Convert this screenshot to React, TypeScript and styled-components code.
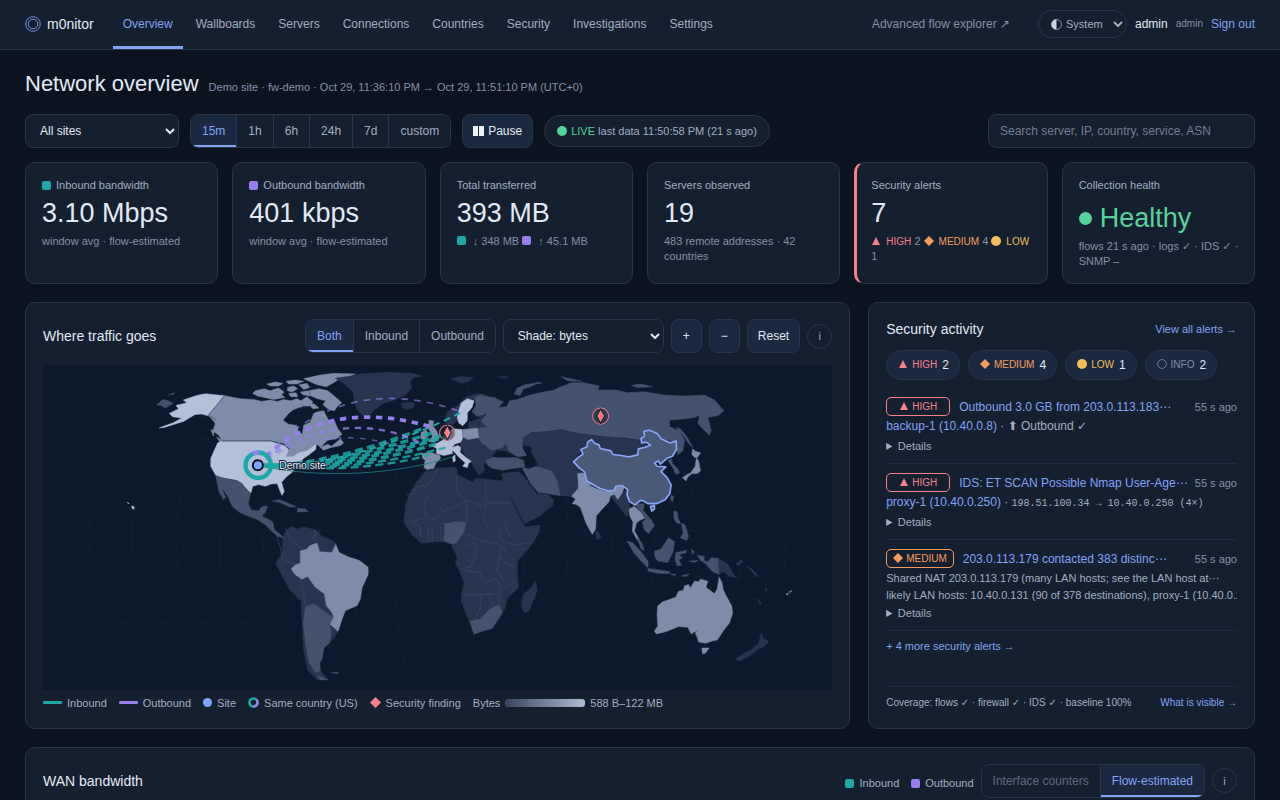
import React from 'react';
import styled, { createGlobalStyle, css } from 'styled-components';

const c = {
  bg: '#0b1320',
  panel: '#141f30',
  raised: '#1a2840',
  line: '#28354a',
  soft: '#202c40',
  text: '#e2e9f5',
  mid: '#a3afc1',
  dim: '#8591a5',
  faint: '#5f6b7e',
  accent: '#82a4f4',
  inb: '#1ba8a6',
  outb: '#9580ee',
  high: '#f9808a',
  medium: '#f79d5c',
  low: '#f3bd5c',
  ok: '#56d39a',
};

const Global = createGlobalStyle`
  * { box-sizing: border-box; }
  html { color-scheme: dark; }
  body {
    margin: 0;
    background: ${c.bg};
    color: ${c.text};
    font: 12px/16px "Liberation Sans", Arial, "DejaVu Sans", sans-serif;
  }
  button, input, select { font: inherit; color: inherit; }
  a { color: ${c.accent}; text-decoration: none; }
  h1, h2, p { margin: 0; font-weight: 400; }
`;

const Shell = styled.div`
  display: flex;
  flex-direction: column;
  height: 100vh;
`;

const TopBar = styled.header`
  display: flex;
  align-items: stretch;
  flex: none;
  height: 50px;
  padding: 0 25px;
  background: ${c.panel};
  border-bottom: 1px solid ${c.line};
`;

const Brand = styled.a`
  display: flex;
  align-items: center;
  gap: 6px;
  margin-right: 19px;
  padding-bottom: 2px;
  font-size: 14px;
  color: ${c.text};
`;

const Nav = styled.nav`
  display: flex;
  gap: 3px;
`;

const NavLink = styled.a<{ $on?: boolean }>`
  display: flex;
  align-items: center;
  padding: 0 10px;
  color: ${(p) => (p.$on ? c.accent : c.mid)};
  border-top: 1px solid transparent;
  border-bottom: 3px solid ${(p) => (p.$on ? c.accent : 'transparent')};
`;

const Account = styled.div`
  display: flex;
  align-items: center;
  gap: 8px;
  margin-left: auto;
  padding-bottom: 1px;
`;

const Explorer = styled.a`
  margin-right: 20px;
  color: ${c.dim};
`;

const Role = styled.span`
  font-size: 10px;
  color: ${c.dim};
`;

const Select = styled.select<{ $w: number }>`
  width: ${(p) => p.$w}px;
  height: 34px;
  padding: 0 10px;
  background: ${c.panel};
  border: 1px solid ${c.line};
  border-radius: 8px;
`;

const ThemePicker = styled.label`
  display: flex;
  align-items: center;
  width: 89px;
  height: 28px;
  padding-left: 12px;
  border: 1px solid ${c.line};
  border-radius: 14px;
  font-size: 11px;
  color: ${c.mid};
  svg { flex: none; }
  select {
    flex: 1;
    min-width: 0;
    height: 26px;
    padding: 0;
    border: 0;
    background: transparent;
  }
`;

const Main = styled.main`
  flex: 1;
  min-height: 0;
  padding: 20px 25px 24px;
  overflow-y: auto;
  scrollbar-width: none;
`;

const TitleRow = styled.div`
  display: flex;
  align-items: baseline;
  gap: 10px;
  margin-bottom: 16px;
  h1 { font-size: 22px; line-height: 28px; }
  p { font-size: 11px; color: ${c.dim}; }
`;

const Toolbar = styled.div`
  display: flex;
  align-items: center;
  gap: 11px;
  margin-bottom: 14px;
`;

const Segments = styled.div`
  display: flex;
  height: 34px;
  border: 1px solid ${c.line};
  border-radius: 8px;
  overflow: hidden;
`;

const Segment = styled.button<{ $on?: boolean; $off?: boolean }>`
  padding: 0 11px;
  border: 0;
  border-right: 1px solid ${c.line};
  background: ${c.panel};
  color: ${(p) => (p.$off ? c.faint : c.mid)};
  &:last-child { border-right: 0; }
  ${(p) => p.$on && css`
    background: ${c.raised};
    color: ${c.accent};
    box-shadow: inset 0 -2px ${c.accent};
  `}
`;

const Button = styled.button`
  display: flex;
  align-items: center;
  justify-content: center;
  gap: 4px;
  height: 34px;
  min-width: 31px;
  padding: 0 10px;
  background: ${c.raised};
  border: 1px solid ${c.line};
  border-radius: 8px;
`;

const InfoButton = styled.button`
  width: 25px;
  height: 25px;
  padding: 0;
  background: none;
  border: 1px solid ${c.line};
  border-radius: 50%;
  font-size: 11px;
  color: ${c.mid};
`;

const Live = styled.div`
  display: flex;
  align-items: center;
  gap: 4px;
  height: 32px;
  padding: 0 12px;
  background: ${c.panel};
  border: 1px solid ${c.line};
  border-radius: 16px;
  font-size: 11px;
  color: ${c.mid};
  b { font-weight: 400; color: ${c.ok}; }
`;

const Search = styled.input`
  width: 267px;
  height: 34px;
  margin-left: auto;
  padding: 0 11px;
  background: ${c.panel};
  border: 1px solid ${c.line};
  border-radius: 8px;
  &::placeholder { color: #737e90; }
`;

const Kpis = styled.section`
  display: grid;
  grid-template-columns: repeat(6, 1fr);
  gap: 14px;
  margin-bottom: 18px;
`;

const Kpi = styled.article<{ $alert?: boolean }>`
  min-width: 0;
  padding: 14px 12px 14px 16px;
  background: ${c.panel};
  border: 1px solid ${c.line};
  border-radius: 10px;
  ${(p) => p.$alert && css`
    padding-left: 14px;
    border-left: 3px solid ${c.high};
  `}
`;

const KpiLabel = styled.h2`
  display: flex;
  align-items: center;
  gap: 5px;
  font-size: 11px;
  line-height: 16px;
  color: ${c.mid};
`;

const KpiValue = styled.p<{ $ok?: boolean }>`
  font-size: 27px;
  line-height: 41px;
  ${(p) => p.$ok && css`
    display: flex;
    align-items: center;
    gap: 8px;
    margin-top: 5px;
    color: ${c.ok};
  `}
`;

const Swatch = styled.i<{ $color: string }>`
  display: inline-block;
  width: 9px;
  height: 9px;
  border-radius: 2px;
  background: ${(p) => p.$color};
`;

const KpiNote = styled.p`
  font-size: 11px;
  line-height: 15px;
  color: ${c.dim};
  ${Swatch} { margin-right: 4px; }
`;

const Dot = styled.i<{ $size: number; $color: string }>`
  display: inline-block;
  flex: none;
  width: ${(p) => p.$size}px;
  height: ${(p) => p.$size}px;
  border-radius: 50%;
  background: ${(p) => p.$color};
`;

const Sev = styled.span<{ $color: string }>`
  font-size: 10px;
  color: ${(p) => p.$color};
  svg { margin-right: 5px; vertical-align: -1px; }
`;

const Split = styled.div`
  display: grid;
  grid-template-columns: 32fr 15fr;
  gap: 18px;
  margin-bottom: 18px;
`;

const Panel = styled.section`
  display: flex;
  flex-direction: column;
  min-width: 0;
  padding: 16px 17px 17px;
  background: ${c.panel};
  border: 1px solid ${c.line};
  border-radius: 10px;
`;

const PanelHead = styled.div`
  display: flex;
  align-items: center;
  gap: 7px;
  margin-bottom: 12px;
  h2 { margin-right: auto; font-size: 14px; line-height: 20px; }
`;

const MapCanvas = styled.svg`
  display: block;
  width: 100%;
  background: #0c192c;
`;

const Legend = styled.ul`
  display: flex;
  align-items: center;
  gap: 12px;
  margin: 5px 0 0;
  padding: 0;
  list-style: none;
  font-size: 11px;
  color: ${c.mid};
  li { display: flex; align-items: center; gap: 5px; }
`;

const LineKey = styled.i<{ $color: string }>`
  width: 19px;
  height: 3px;
  border-radius: 1px;
  background: ${(p) => p.$color};
`;

const Ramp = styled.i`
  width: 80px;
  height: 8px;
  border-radius: 3px;
  background: linear-gradient(90deg, #36445f, #afbcd4);
`;

const SideHead = styled.div`
  display: flex;
  align-items: center;
  justify-content: space-between;
  margin-bottom: 12px;
  padding-top: 1px;
  h2 { font-size: 14px; line-height: 18px; }
  a { font-size: 11px; }
`;

const Chips = styled.div`
  display: flex;
  gap: 8px;
  margin-bottom: 8px;
`;

const Chip = styled.button`
  display: flex;
  align-items: center;
  gap: 5px;
  height: 30px;
  padding: 0 10px 0 11px;
  background: ${c.raised};
  border: 1px solid ${c.line};
  border-radius: 15px;
  && svg { margin-right: 4px; }
`;

const Alert = styled.article`
  padding: 9px 0 7px;
  border-bottom: 1px solid ${c.soft};
`;

const AlertHead = styled.div`
  display: flex;
  align-items: center;
  height: 19px;
  a {
    flex: 1;
    min-width: 0;
    margin: 0 7px 0 9px;
    overflow: hidden;
    white-space: nowrap;
  }
  time { font-size: 11px; color: ${c.dim}; }
`;

const Badge = styled.span<{ $color: string }>`
  display: flex;
  align-items: center;
  justify-content: center;
  min-width: 64px;
  height: 19px;
  padding: 0 6px;
  border: 1px solid ${(p) => p.$color};
  border-radius: 5px;
  && svg { margin-right: 3px; }
`;

const AlertLine = styled.p`
  font-size: 12px;
  line-height: 20px;
  height: 20px;
  white-space: nowrap;
  overflow: hidden;
  color: ${c.mid};
`;

const AlertText = styled(AlertLine)`
  font-size: 11px;
`;

const AlertNote = styled(AlertText)`
  line-height: 15px;
  height: 15px;
`;

const Mono = styled.span`
  font-family: "Liberation Mono", monospace;
  font-size: 10px;
`;

const Details = styled.details`
  font-size: 11px;
  line-height: 20px;
  color: ${c.mid};
`;

const More = styled.a`
  margin: 7px 0 auto;
  font-size: 11px;
`;

const Coverage = styled.div`
  display: flex;
  justify-content: space-between;
  padding-top: 8px;
  border-top: 1px solid ${c.soft};
  font-size: 10px;
  white-space: nowrap;
  color: ${c.mid};
`;

const Plot = styled.div`
  height: 220px;
`;

type Level = 'HIGH' | 'MEDIUM' | 'LOW' | 'INFO';
const levelColor: Record<Level, string> = { HIGH: c.high, MEDIUM: c.medium, LOW: c.low, INFO: c.dim };

function Severity({ level }: { level: Level }) {
  const color = levelColor[level];
  return (
    <Sev $color={color}>
      <svg width="10" height="10" viewBox="0 0 10 10" aria-hidden="true">
        {level === 'HIGH' && <path d="M5 1 9 9H1Z" fill={color} />}
        {level === 'MEDIUM' && <path d="M5 0 10 5 5 10 0 5Z" fill={color} />}
        {level === 'LOW' && <circle cx="5" cy="5" r="5" fill={color} />}
        {level === 'INFO' && <circle cx="5" cy="5" r="4.4" fill="none" stroke={color} strokeWidth="0.8" />}
      </svg>
      {level}
    </Sev>
  );
}

const land = {
  none: '#27344e',
  low: '#44536d',
  mid: '#7d8ca8',
  high: '#b3c0d8',
};

const americas: [string, string][] = [
  [land.high, 'M553,107 497,101 470,106 430,120 441,128 408,136 416,146 388,160 398,170 425,174 400,188 358,203 372,202 430,184 465,163 485,162 508,168 522,178 532,206 537,192 527,175 505,165Z'],
  [land.low, 'M350,135 368,118 385,122 400,130 388,136 376,144 365,136Z M385,104 405,98 400,103Z'],
  [land.mid, 'M553,107 600,116 640,118 665,124 690,120 712,124 730,118 752,122 770,116 782,122 800,110 818,126 806,138 790,138 760,148 745,160 728,180 745,192 770,196 775,218 786,222 790,195 810,186 820,160 835,154 850,152 858,168 868,186 882,182 892,205 905,222 888,236 862,240 840,262 862,252 874,258 900,236 910,248 900,256 872,262 850,270 830,252 812,268 800,272 780,277 762,286 740,290 748,265 730,250 690,241 545,241 536,225 518,212 526,190 505,165Z'],
  [land.mid, 'M512,208 522,214 520,228Z M530,230 548,243 540,248Z'],
  [land.mid, 'M645,92 672,86 690,92 715,84 732,96 724,104 734,112 700,118 672,112 652,108 638,100Z M680,72 705,66 728,70 715,78 690,78Z M742,82 760,78 772,86 755,96 742,92Z M738,64 766,60 790,64 770,72 745,72Z M776,74 800,70 808,82 790,88Z M780,96 804,92 810,108 788,104Z M745,100 768,98 772,110 752,110Z'],
  [land.mid, 'M790,56 835,46 880,40 945,42 925,50 898,56 880,68 858,80 830,74 812,66Z M806,92 836,86 862,92 880,106 904,128 892,138 882,152 862,146 848,134 856,122 832,116 812,108Z M800,128 822,132 836,144 818,146Z'],
  [land.high, 'M545,243 690,243 712,250 732,256 746,268 738,290 760,287 776,278 800,272 828,252 826,268 806,284 788,296 782,308 765,322 758,334 738,350 724,366 732,394 725,405 717,386 711,370 692,371 676,378 655,373 638,378 632,398 620,387 605,368 588,359 546,352 527,345 512,318 512,295 522,272 533,248Z'],
  [land.low, 'M527,348 546,353 590,361 605,370 620,389 631,400 624,430 634,450 656,452 664,440 682,437 676,455 665,468 688,478 698,486 702,508 718,520 730,532 712,528 690,508 672,490 650,477 625,468 598,456 576,438 566,414 545,380 556,412 550,418 536,392Z'],
  [land.low, 'M697,422 718,418 738,426 768,440 748,440 720,427Z M772,444 795,446 804,454 772,455 Z'],
  [land.high, 'M276,436 283,440 282,447 276,444Z M262,426 268,429 266,431Z'],
  [land.none, 'M728,528 740,508 755,498 770,506 790,500 825,508 845,528 872,538 888,550 895,575 925,590 955,600 983,620 983,640 965,680 960,715 950,735 915,750 905,775 893,812 885,825 868,846 850,862 845,895 838,905 840,930 862,957 832,958 803,930 790,870 786,800 783,722 750,690 708,612 710,600 726,580Z'],
  [land.mid, 'M780,572 800,566 808,556 830,548 838,574 875,576 886,552 896,576 925,590 957,600 983,620 983,642 965,682 960,715 950,735 915,750 905,775 893,812 868,790 880,770 874,755 858,735 852,700 825,680 802,648 785,656 765,643 753,625 764,614 780,608Z'],
  [land.low, 'M796,738 822,730 850,752 876,768 868,792 872,815 868,846 850,862 845,895 838,905 840,930 826,936 806,905 796,850 789,790Z'],
  [land.low, 'M873,936 895,934 890,939Z M832,946 862,957 840,957Z'],
];

const atlantic: [string, string][] = [
  [land.none, 'M105,55 150,48 180,42 260,37 335,40 365,48 336,54 328,68 334,84 310,108 275,122 245,132 222,150 206,166 192,170 172,152 163,128 158,96 130,70Z'],
  [land.none, 'M303,130 320,127 340,128 342,140 320,148 305,142Z'],
  [land.none, 'M450,56 480,50 518,52 508,62 486,70Z M590,50 622,50 610,55Z'],
  [land.none, 'M436,192 434,172 440,155 470,138 490,115 520,102 545,102 560,108 548,120 520,118 500,116 482,128 474,152 470,180 455,194Z'],
  [land.low, 'M522,112 545,104 552,130 558,150 550,165 528,168 514,155 526,136Z'],
  [land.high, 'M482,128 500,116 520,122 514,142 500,158 500,182 486,197 474,188 470,172 474,152Z'],
  [land.none, 'M505,185 530,170 556,168 600,190 640,230 665,255 640,285 610,270 585,285 568,300 548,312 552,330 536,345 524,330 510,304 492,282 478,262 480,240 500,230Z'],
  [land.low, 'M530,205 565,200 580,216 618,244 605,262 572,270 545,250 534,236Z'],
  [land.mid, 'M385,180 400,183 396,196 408,212 416,234 402,246 384,244 396,228 384,206Z M362,216 378,210 384,226 372,238 360,234Z'],
  [land.high, 'M392,256 412,248 430,238 455,206 484,208 486,234 480,246 462,252 452,264 456,280 430,286 408,280 408,264Z'],
  [land.mid, 'M364,280 392,277 418,286 420,294 406,308 400,324 380,328 370,322 374,300 366,294Z M486,208 530,204 534,232 502,238 486,230Z'],
  [land.high, 'M446,264 472,256 480,262 478,276 494,290 512,304 504,308 500,322 486,318 494,308 476,292 462,276Z M456,290 463,284 464,302 458,306Z'],
  [land.low, 'M556,300 580,290 640,290 668,300 672,320 640,324 606,330 575,324 560,314Z'],
  [land.low, 'M545,108 580,112 608,126 592,142 618,140 626,122 650,118 690,104 728,96 760,90 780,80 812,68 850,68 895,78 890,90 945,90 980,98 1030,95 1090,105 1150,108 1210,105 1240,120 1268,152 1250,166 1220,172 1230,210 1225,226 1205,206 1190,190 1195,165 1180,172 1150,176 1105,180 1105,200 1135,212 1150,240 1145,272 1130,284 1125,245 1090,238 1060,218 1045,212 1028,216 1020,240 970,232 920,235 880,226 840,222 810,215 780,208 740,214 692,216 670,232 664,256 690,284 650,290 625,272 612,242 580,216 556,196 540,184 556,165Z'],
  [land.low, 'M640,102 650,84 672,74 712,68 690,80 668,86 658,106Z M700,70 712,66 722,70Z M780,50 810,56 842,64 800,62Z M992,76 1018,72 1054,80 1010,82Z'],
  [land.none, 'M668,232 692,217 740,214 780,208 812,216 880,226 960,234 1020,240 1044,256 1012,268 1008,284 980,290 932,284 900,264 872,240 846,264 818,304 856,350 826,350 830,384 812,408 778,406 770,360 752,332 712,322 700,300 690,270 668,256Z'],
  [land.low, 'M664,322 684,326 704,318 752,332 770,362 778,406 742,400 712,396 690,370 678,348Z'],
  [land.none, 'M602,340 650,334 668,345 690,376 708,400 738,400 758,418 756,434 718,466 672,490 662,472 640,430 622,400 608,366Z'],
  [land.none, 'M375,332 412,324 456,320 468,324 470,342 500,358 516,366 524,354 552,356 606,362 628,412 655,468 668,492 672,500 718,494 714,518 690,556 650,602 650,650 654,680 618,716 612,745 596,775 570,804 540,812 520,820 508,790 482,722 482,700 490,668 472,622 464,608 470,590 455,560 452,550 430,545 400,543 362,549 334,522 310,486 316,430 330,396 350,362Z'],
  [land.none, 'M704,662 710,688 700,715 684,752 670,757 662,738 668,700 690,684Z'],
  [land.low, 'M432,490 460,484 496,486 490,514 466,548 450,550 430,540Z M508,782 540,775 560,752 584,736 596,735 604,756 575,803 545,812 520,820Z'],
];

const pacific: [string, string][] = [
  [land.mid, 'M50,340 70,338 76,362 100,379 142,392 164,378 190,380 182,402 170,420 160,404 148,408 144,424 124,446 106,466 104,506 94,522 76,490 58,440 44,432 34,430 44,416 32,408 52,384Z'],
  [land.none, 'M150,408 160,404 170,420 184,400 194,386 204,416 206,440 198,470 184,452 168,432Z M104,510 112,514 120,530 112,538 105,534Z'],
  [land.mid, 'M204,446 220,438 246,462 250,474 236,480 226,488 220,512 236,540 228,538 214,512 216,486 206,466Z'],
  [land.low, 'M222,432 250,430 246,450 270,478 280,496 262,520 250,508 244,486 254,476 240,456Z M228,532 242,546 250,570 240,566Z'],
  [land.low, 'M198,542 214,546 240,574 262,604 260,622 240,602 218,576Z M260,624 290,628 326,634 322,640 290,638 262,632Z M280,572 300,566 322,532 340,544 336,574 320,606 290,602 282,590Z M344,576 376,570 374,578 352,582 364,592 352,598 362,614 348,616 342,598Z M326,640 345,642 340,646Z M360,646 384,640 376,648Z M384,602 410,600 400,606Z M390,566 400,574 394,582Z'],
  [land.low, 'M338,452 348,454 350,470 358,490 346,488 338,472Z M360,488 372,494 376,508 382,528 376,540 358,532 366,518Z M330,405 338,408 334,424 328,416Z'],
  [land.low, 'M408,584 430,588 428,600 440,604 450,592 472,594 474,642 452,632 434,610 418,600Z'],
  [land.none, 'M472,594 500,612 514,636 526,652 504,648 486,634 474,640Z M524,610 540,598 546,604 530,616Z M555,614 575,628 592,648 580,644Z M612,680 618,690 614,692Z M588,714 602,730 596,732Z'],
  [land.mid, 'M290,736 304,724 344,710 352,692 366,690 370,676 382,672 388,682 400,662 412,664 418,656 440,662 434,680 460,700 468,684 474,650 482,666 486,688 494,704 512,738 514,758 504,788 488,808 468,838 450,842 434,848 412,844 408,830 402,818 410,808 390,820 380,800 352,798 318,812 286,820 280,812 290,796 288,760Z'],
  [land.mid, 'M422,862 444,862 432,878 424,880Z M674,700 682,698 678,704Z M682,694 692,690 686,696Z'],
  [land.none, 'M600,816 606,834 622,842 606,860 590,866 568,884 536,902 522,896 548,878 572,866 592,848Z'],
  [land.mid, 'M394,266 404,274 418,278 410,290 400,292 392,282Z M406,292 412,302 418,332 408,340 392,340 380,350 374,362 364,352 376,344 388,338 402,318Z'],
  [land.low, 'M320,300 332,296 334,310 350,326 356,338 344,342 336,324Z M346,202 358,206 376,228 396,262 382,250 366,226Z'],
  [land.none, 'M86,374 104,376 142,388 136,392 106,384Z'],
];

const borders =
  'M410,322 404,345 382,375 350,380 340,400 318,404 M376,405 430,452 M376,405 374,452 380,470 330,486 M430,452 500,420 552,440 M430,452 404,476 384,474 M466,340 470,400 500,420 M556,358 556,440 548,480 560,500 M556,425 630,425 M500,420 498,484 M384,500 384,545 M395,500 395,545 M420,498 422,545 M335,490 360,500 360,530 M496,520 540,540 560,545 590,550 604,560 M496,560 520,545 528,575 510,620 480,625 M590,500 604,540 640,555 690,545 M620,470 612,500 630,530 M604,560 596,590 590,630 610,660 M590,590 640,620 M610,560 612,580 M490,630 540,636 546,664 560,670 M488,704 540,702 590,700 M560,664 590,655 600,690 M540,702 540,740 524,778 M560,700 580,736 M590,700 612,680 650,660 M598,700 596,735 M560,430 620,430';

const tealFlows = [
  [1160, 200], [1176, 218], [1200, 226], [1226, 226], [1185, 252], [1215, 262], [1165, 284],
];

function Finding({ x, y, r }: { x: number; y: number; r: number }) {
  return (
    <g transform={`translate(${x} ${y})`}>
      <circle r={r} fill="#1c2438" fillOpacity="0.5" stroke="#e0778c" strokeWidth="3" />
      <path d="M0-24 13,0 0,24-13,0Z" fill="#12182b" />
      <path d="M0-18 10,0 0,18-10,0Z" fill="#ff7f86" />
    </g>
  );
}

function Shapes({ list, dx }: { list: [string, string][]; dx: number }) {
  return (
    <g transform={`translate(${dx} 0)`} strokeWidth="1.5" strokeLinejoin="round">
      {list.map(([fill, d]) => <path key={d} d={d} fill={fill} stroke={fill} />)}
    </g>
  );
}

function TrafficMap() {
  const meridians = Array.from({ length: 17 }, (_, i) => i - 8);
  return (
    <MapCanvas viewBox="10 15 2362 972" role="img" aria-label="Traffic by country">
      <g fill="none" stroke="#102034" strokeWidth="2.5">
        {meridians.map((m) => {
          const e = 1190 + m * 130;
          const p = 1190 + m * 82;
          return <path key={m} d={`M${p},30 Q${e + m * 6},300 ${e},580 Q${e + m * 2},780 ${p},980`} />;
        })}
        <path d="M340,170H2040M270,235H2110M210,303H2170M170,372H2210M140,440H2240M120,512H2260M120,580H2260M130,648H2250M150,715H2230M180,787H2200M220,855H2160M280,922H2100" />
      </g>
      <Shapes list={americas} dx={0} />
      <Shapes list={atlantic} dx={780} />
      <g transform="translate(780 0)">
        <path d="M664,262 682,256 694,264 688,276 700,292 710,312 698,320 686,306 676,282Z M574,288 590,270 616,276 650,290 620,292 590,292Z M500,182 508,160 514,150 512,170 540,172 510,184Z" fill="#0c192c" />
        <path d={borders} fill="none" stroke="#3a4965" strokeWidth="2" />
        <path d="M-80,500 -60,560 -50,600 -10,610 M-45,500 -30,540 0,560 M20,545 60,510 M0,655 10,700 15,735 M45,510 44,548" fill="none" stroke="#3a4965" strokeWidth="2" />
      </g>
      <path d="M553,107 505,165 527,178M545,242H690L730,251 748,268" fill="none" stroke="#3f4f6b" strokeWidth="2" />
      <Shapes list={pacific} dx={1560} />
      <g transform="translate(1560 0)" fill="#495a76" stroke="#8aa6f8" strokeWidth="5" strokeLinejoin="round">
        <path d="M92,238 102,250 114,254 118,265 150,272 156,283 180,286 204,290 230,284 232,266 250,262 268,255 256,246 242,248 240,235 250,228 248,214 265,210 288,220 300,236 326,248 345,243 346,268 334,288 318,294 298,312 292,302 280,308 288,318 314,320 300,334 318,352 330,374 326,400 312,418 286,430 260,430 248,422 238,420 222,434 206,424 198,404 200,388 184,376 164,378 160,390 142,392 116,384 78,362 70,334 54,322 38,305 54,290 66,282 60,268 78,260 80,246Z" />
        <path d="M268,438 280,436 280,446 272,452Z" />
      </g>
      <g fill="none" strokeLinecap="butt">
        {tealFlows.map(([x, y], i) => (
          <path key={x} d={`M652,315 C${800 + i * 8},${318 + i * 3} ${970 + i * 10},${274 + i * 8} ${x},${y}`} stroke={c.inb} strokeOpacity="0.85" strokeWidth={i < 5 ? 10 : 7} strokeDasharray="24 13" strokeDashoffset={i * 9} />
        ))}
        <path d="M652,315 C850,330 1100,240 1265,155" stroke={c.inb} strokeWidth="6" strokeDasharray="20 14" />
        <path d="M652,315 C850,360 1080,340 1235,290" stroke="#18807f" strokeWidth="2.5" />
        <path d="M652,315 C800,150 1000,150 1170,200" stroke={c.outb} strokeWidth="11" strokeDasharray="19 17" />
        <path d="M652,315 C800,190 1000,170 1150,255" stroke={c.outb} strokeOpacity="0.8" strokeWidth="7" strokeDasharray="19 17" strokeDashoffset="6" />
        <path d="M652,315 C800,210 960,215 1130,275" stroke={c.outb} strokeOpacity="0.6" strokeWidth="4" strokeDasharray="17 19" />
        <path d="M652,315 C850,80 1080,90 1260,155" stroke={c.outb} strokeOpacity="0.65" strokeWidth="5" strokeDasharray="19 19" />
        <path d="M652,315H730" stroke={c.inb} strokeWidth="12" />
        <circle cx="654" cy="315" r="38" stroke={c.inb} strokeWidth="13" />
        <path d="M638,280 Q648,276 658,278" stroke={c.outb} strokeWidth="12" />
      </g>
      <circle cx="653" cy="315" r="15" fill="#7fa6fa" stroke="#0b1324" strokeWidth="6" />
      <text x="717" y="326" fontSize="31" fill="#e2e9f5" stroke="#142036" strokeWidth="6" paintOrder="stroke">Demo site</text>
      <Finding x={1220} y={218} r={23} />
      <Finding x={1679} y={168} r={24} />
    </MapCanvas>
  );
}

const pages = ['Overview', 'Wallboards', 'Servers', 'Connections', 'Countries', 'Security', 'Investigations', 'Settings'];
const ranges = ['15m', '1h', '6h', '24h', '7d', 'custom'];
const counts: [Level, number][] = [['HIGH', 2], ['MEDIUM', 4], ['LOW', 1], ['INFO', 2]];

export default function App() {
  return (
    <Shell>
      <Global />
      <TopBar>
        <Brand href="#">
          <svg width="16" height="16" viewBox="0 0 16 16" fill="none" stroke={c.accent} aria-hidden="true">
            <circle cx="8" cy="8" r="7.3" strokeWidth="0.8" />
            <circle cx="8" cy="8" r="4.8" strokeWidth="0.9" />
          </svg>
          m0nitor
        </Brand>
        <Nav>
          {pages.map((p, i) => <NavLink key={p} href="#" $on={i === 0}>{p}</NavLink>)}
        </Nav>
        <Account>
          <Explorer href="#">Advanced flow explorer ↗</Explorer>
          <ThemePicker>
            <svg width="11" height="11" viewBox="0 0 11 11" aria-hidden="true">
              <circle cx="5.5" cy="5.5" r="5" fill="none" stroke={c.mid} strokeWidth="0.8" />
              <path d="M5.5 0.5A5 5 0 0 0 5.5 10.5Z" fill="#c9d2e0" />
            </svg>
            <select aria-label="Theme"><option>System</option></select>
          </ThemePicker>
          <span>admin</span>
          <Role>admin</Role>
          <a href="#">Sign out</a>
        </Account>
      </TopBar>
      <Main>
        <TitleRow>
          <h1>Network overview</h1>
          <p>Demo site · fw-demo · Oct 29, 11:36:10 PM → Oct 29, 11:51:10 PM (UTC+0)</p>
        </TitleRow>
        <Toolbar>
          <Select $w={154} aria-label="Site"><option>All sites</option></Select>
          <Segments>
            {ranges.map((r, i) => <Segment key={r} $on={i === 0}>{r}</Segment>)}
          </Segments>
          <Button>
            <svg width="11" height="10" viewBox="0 0 11 10" aria-hidden="true">
              <path d="M0 0H5V10H0ZM6 0H11V10H6Z" fill="#eef1f6" />
            </svg>
            Pause
          </Button>
          <Live>
            <Dot $size={10} $color={c.ok} />
            <span><b>LIVE</b> last data 11:50:58 PM (21 s ago)</span>
          </Live>
          <Search type="search" aria-label="Search" placeholder="Search server, IP, country, service, ASN" />
        </Toolbar>
        <Kpis>
          <Kpi>
            <KpiLabel><Swatch $color={c.inb} />Inbound bandwidth</KpiLabel>
            <KpiValue>3.10 Mbps</KpiValue>
            <KpiNote>window avg · flow-estimated</KpiNote>
          </Kpi>
          <Kpi>
            <KpiLabel><Swatch $color={c.outb} />Outbound bandwidth</KpiLabel>
            <KpiValue>401 kbps</KpiValue>
            <KpiNote>window avg · flow-estimated</KpiNote>
          </Kpi>
          <Kpi>
            <KpiLabel>Total transferred</KpiLabel>
            <KpiValue>393 MB</KpiValue>
            <KpiNote><Swatch $color={c.inb} /> ↓ 348 MB <Swatch $color={c.outb} /> ↑ 45.1 MB</KpiNote>
          </Kpi>
          <Kpi>
            <KpiLabel>Servers observed</KpiLabel>
            <KpiValue>19</KpiValue>
            <KpiNote>483 remote addresses · 42 countries</KpiNote>
          </Kpi>
          <Kpi $alert>
            <KpiLabel>Security alerts</KpiLabel>
            <KpiValue>7</KpiValue>
            <KpiNote>
              <Severity level="HIGH" /> 2 <Severity level="MEDIUM" /> 4 <Severity level="LOW" /><br />1
            </KpiNote>
          </Kpi>
          <Kpi>
            <KpiLabel>Collection health</KpiLabel>
            <KpiValue $ok><Dot $size={13} $color={c.ok} />Healthy</KpiValue>
            <KpiNote>flows 21 s ago · logs ✓ · IDS ✓ · SNMP –</KpiNote>
          </Kpi>
        </Kpis>
        <Split>
          <Panel>
            <PanelHead>
              <h2>Where traffic goes</h2>
              <Segments>
                <Segment $on>Both</Segment>
                <Segment>Inbound</Segment>
                <Segment>Outbound</Segment>
              </Segments>
              <Select $w={161} aria-label="Shade"><option>Shade: bytes</option></Select>
              <Button aria-label="Zoom in">+</Button>
              <Button aria-label="Zoom out">−</Button>
              <Button>Reset</Button>
              <InfoButton aria-label="About this map">i</InfoButton>
            </PanelHead>
            <TrafficMap />
            <Legend>
              <li><LineKey $color={c.inb} />Inbound</li>
              <li><LineKey $color={c.outb} />Outbound</li>
              <li><Dot $size={9} $color="#7fa6fa" />Site</li>
              <li>
                <svg width="11" height="11" viewBox="0 0 11 11" fill="none" strokeWidth="2.6" aria-hidden="true">
                  <circle cx="5.5" cy="5.5" r="4" stroke={c.inb} />
                  <path d="M8.3 2.7A4 4 0 0 1 5.5 9.5" stroke={c.outb} />
                </svg>
                Same country (US)
              </li>
              <li>
                <svg width="11" height="11" viewBox="0 0 11 11" aria-hidden="true">
                  <path d="M5.5 0 11 5.5 5.5 11 0 5.5Z" fill={c.high} />
                </svg>
                Security finding
              </li>
              <li>Bytes<Ramp />588 B–122 MB</li>
            </Legend>
          </Panel>
          <Panel>
            <SideHead>
              <h2>Security activity</h2>
              <a href="#">View all alerts →</a>
            </SideHead>
            <Chips>
              {counts.map(([level, n]) => <Chip key={level}><Severity level={level} />{n}</Chip>)}
            </Chips>
            <Alert>
              <AlertHead>
                <Badge $color={c.high}><Severity level="HIGH" /></Badge>
                <a href="#">Outbound 3.0 GB from 203.0.113.183⋯</a>
                <time>55 s ago</time>
              </AlertHead>
              <AlertLine><a href="#">backup-1 (10.40.0.8)</a> · ⬆ Outbound ✓</AlertLine>
              <Details><summary>Details</summary></Details>
            </Alert>
            <Alert>
              <AlertHead>
                <Badge $color={c.high}><Severity level="HIGH" /></Badge>
                <a href="#">IDS: ET SCAN Possible Nmap User-Age⋯</a>
                <time>55 s ago</time>
              </AlertHead>
              <AlertLine><a href="#">proxy-1 (10.40.0.250)</a> · <Mono>198.51.100.34 → 10.40.0.250 (4×)</Mono></AlertLine>
              <Details><summary>Details</summary></Details>
            </Alert>
            <Alert>
              <AlertHead>
                <Badge $color={c.medium}><Severity level="MEDIUM" /></Badge>
                <a href="#">203.0.113.179 contacted 383 distinc⋯</a>
                <time>55 s ago</time>
              </AlertHead>
              <AlertText>Shared NAT 203.0.113.179 (many LAN hosts; see the LAN host at⋯</AlertText>
              <AlertNote>likely LAN hosts: 10.40.0.131 (90 of 378 destinations), proxy-1 (10.40.0.2</AlertNote>
              <Details><summary>Details</summary></Details>
            </Alert>
            <More href="#">+ 4 more security alerts →</More>
            <Coverage>
              <span>Coverage: flows ✓ · firewall ✓ · IDS ✓ · baseline 100%</span>
              <a href="#">What is visible →</a>
            </Coverage>
          </Panel>
        </Split>
        <Panel>
          <PanelHead>
            <h2>WAN bandwidth</h2>
            <Legend>
              <li><Swatch $color={c.inb} />Inbound</li>
              <li><Swatch $color={c.outb} />Outbound</li>
            </Legend>
            <Segments>
              <Segment $off>Interface counters</Segment>
              <Segment $on>Flow-estimated</Segment>
            </Segments>
            <InfoButton aria-label="About this chart">i</InfoButton>
          </PanelHead>
          <Plot />
        </Panel>
      </Main>
    </Shell>
  );
}
